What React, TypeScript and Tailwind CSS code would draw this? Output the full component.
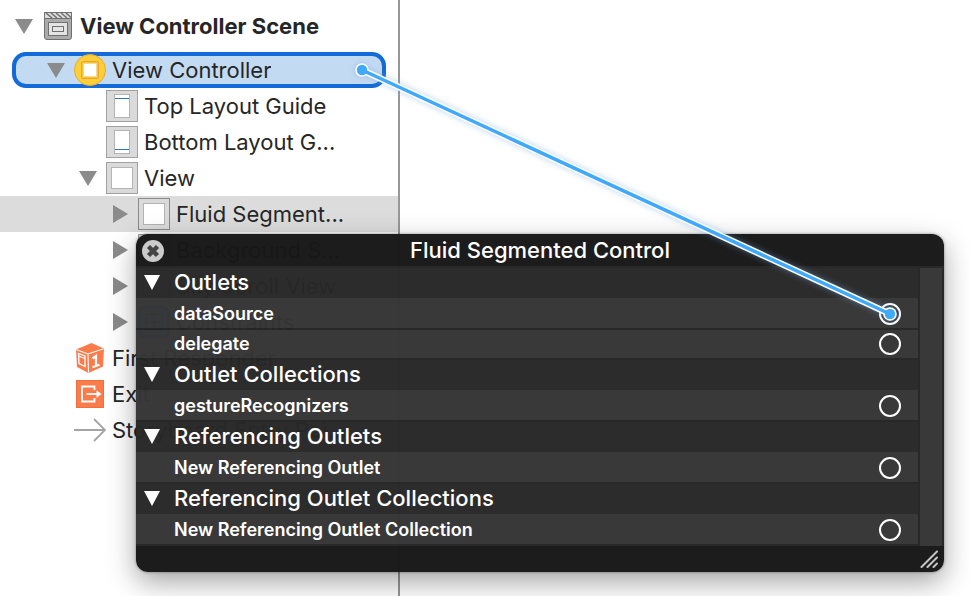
import type { ReactNode } from "react";

function Down({ size = "w-[18px]" }: { size?: string }) {
  return (
    <svg viewBox="0 0 18 15" preserveAspectRatio="none" className={"h-[15px] shrink-0 " + size} aria-hidden="true">
      <path d="M0 0H18L9 15Z" fill="currentColor" />
    </svg>
  );
}

function Right() {
  return (
    <svg viewBox="0 0 15 18" className="h-[18px] w-[15px] shrink-0" aria-hidden="true">
      <path d="M0 0V18L15 9Z" fill="currentColor" />
    </svg>
  );
}

function SceneIcon() {
  return (
    <svg viewBox="0 0 32 32" className="size-8 shrink-0" aria-hidden="true">
      <rect x="2.5" y="2.5" width="27" height="6" fill="#dedede" stroke="#707070" />
      <path d="M4 3l6 5M9 3l6 5M14 3l6 5M19 3l6 5M24 3l5 4.500" stroke="#707070" strokeWidth="1.600" />
      <path d="M2.500 8.500H29.500V27a2.500 2.500 0 0 1-2.500 2.500H5A2.500 2.500 0 0 1 2.500 27Z" fill="#ababab" stroke="#707070" />
      <rect x="6.500" y="12.500" width="19" height="13" fill="#e4e4e4" stroke="#707070" />
      <rect x="10.500" y="16.500" width="11" height="5" fill="#e4e4e4" stroke="#707070" />
    </svg>
  );
}

function ControllerIcon() {
  return (
    <svg viewBox="0 0 32 32" className="size-8 shrink-0" aria-hidden="true">
      <circle cx="16" cy="16" r="15.500" fill="#fdcf38" stroke="#eda92c" />
      <rect x="7.500" y="7.500" width="17" height="17" rx="1" fill="#fcc433" stroke="#eba52b" />
      <rect x="9" y="9" width="14" height="14" fill="#fff" />
      <rect x="9.500" y="9.500" width="13" height="13" fill="none" stroke="#f0b030" strokeDasharray="1 1" />
    </svg>
  );
}

function BoxIcon({ kind }: { kind: "top" | "bottom" | "view" | "selected" }) {
  const guide = kind === "top" || kind === "bottom";
  return (
    <svg viewBox="0 0 32 32" className="size-8 shrink-0" aria-hidden="true">
      <rect x="0.500" y="0.500" width="31" height="31" fill="#dadada" stroke={kind === "selected" ? "#8a8a8a" : "#a2a2a2"} />
      {guide ? (
        <rect x="8.500" y="4.500" width="15" height="23" fill="#fff" stroke="#b4b4b4" />
      ) : (
        <rect x="5.500" y="5.500" width="21" height="21" fill="#fff" stroke="#b4b4b4" />
      )}
      {guide && <path d={kind === "top" ? "M9 8.500H23" : "M9 23.500H23"} stroke="#2e7bbd" />}
    </svg>
  );
}

function ConstraintsIcon() {
  return (
    <svg viewBox="0 0 32 32" className="size-8 shrink-0" aria-hidden="true">
      <rect x="1.500" y="1.500" width="29" height="29" rx="5" fill="#a9b8ff" stroke="#3f5fe0" strokeWidth="3" />
      <path d="M8 8H24V24H8ZM16 8V24M8 16H24" fill="none" stroke="#3f5fe0" strokeWidth="2" />
    </svg>
  );
}

function ResponderIcon() {
  return (
    <svg viewBox="0 0 32 32" className="size-8 shrink-0" aria-hidden="true">
      <path d="M2 7.500L17.500 1L30 6.500L29 24.500L14.500 31L3 25Z" fill="#fb7b4b" />
      <path d="M2.500 7.800L14 12L29.500 6.700M14 12L14.500 30.500" fill="none" stroke="#fff" strokeWidth="1.100" />
      <path d="M4.500 11.500L11 14V24.500L5 21.500ZM4.500 14L11 16.500" fill="none" stroke="#fff" strokeWidth="1.300" />
      <path d="M18.500 16.500L22 14V24M18.500 25.300L25.500 22.800" fill="none" stroke="#fff" strokeWidth="2.200" />
    </svg>
  );
}

function ExitIcon() {
  return (
    <svg viewBox="0 0 32 32" className="size-8 shrink-0" aria-hidden="true">
      <rect x="2.500" y="2.500" width="27" height="27" fill="#fb7b4b" stroke="#ee6f40" />
      <path d="M20.500 12V8.500H8V23.500H20.500V20" fill="none" stroke="#fff" strokeWidth="1.800" />
      <path d="M12.500 16H25" stroke="#fff" strokeWidth="1.800" />
      <path d="M22.500 12.200L27.500 16L22.500 19.800Z" fill="#fff" />
    </svg>
  );
}

function EntryIcon() {
  return (
    <svg viewBox="0 0 32 32" className="size-8 shrink-0" aria-hidden="true">
      <path d="M0 16H31M20 5L31 16L20 27" fill="none" stroke="#a4a4a4" strokeWidth="1.800" />
    </svg>
  );
}

type Arrow = "down" | "right" | "none";

function TreeRow({ indent, arrow, icon, label, className = "" }: { indent: string; arrow: Arrow; icon: ReactNode; label: string; className?: string }) {
  return (
    <li className={"flex h-9 items-center " + indent + " " + className}>
      <span className="flex w-9 shrink-0 justify-center text-[#8b8b8b]">
        {arrow === "none" ? null : (
          <button type="button" aria-label={"Toggle " + label}>
            {arrow === "down" ? <Down /> : <Right />}
          </button>
        )}
      </span>
      {icon}
      <span className="ml-1.5 truncate">{label}</span>
    </li>
  );
}

function Section({ title, items }: { title: string; items: string[] }) {
  return (
    <section>
      <h3 className="flex h-8 items-center border-t-2 border-[#242424]/98 bg-[#282828]/98 bg-clip-padding pb-0.5 pl-2 text-[22px] font-medium">
        <button type="button" aria-label={"Collapse " + title}>
          <Down size="w-4" />
        </button>
        <span className="ml-3.5">{title}</span>
      </h3>
      <ul>
        {items.map((item) => (
          <li key={item} className="flex h-[30px] items-center justify-between bg-[#353535]/98 bg-clip-padding pr-4 pl-[38px] text-[18px] font-semibold not-first:border-t-2 not-first:border-[#242424]/98 first:pt-0.5">
            <span className="pb-0.5">{item}</span>
            <button type="button" aria-label={"Connect " + item} className="size-6 rounded-full p-px">
              <span className="block size-[22px] rounded-full border-2 border-white" />
            </button>
          </li>
        ))}
      </ul>
    </section>
  );
}

function ConnectionsPanel() {
  return (
    <aside className="absolute top-[234px] right-[26px] left-[136px] overflow-hidden rounded-xl text-white shadow-[0_10px_28px_rgba(0,0,0,0.36),0_0_3px_rgba(0,0,0,0.4)]">
      <header className="flex h-8 items-center bg-[#171717]/98 px-1.5">
        <button type="button" aria-label="Close" className="mt-0.5 size-[22px]">
          <svg viewBox="0 0 22 22" className="size-[22px]" aria-hidden="true">
            <circle cx="11" cy="11" r="11" fill="#cbcbcb" />
            <path d="M6.500 6.500L15.500 15.500M15.500 6.500L6.500 15.500" stroke="#444" strokeWidth="4.500" />
          </svg>
        </button>
        <h2 className="flex-1 pr-[22px] text-center text-[22px] font-medium">Fluid Segmented Control</h2>
      </header>
      <div className="flex">
        <div className="min-w-0 flex-1 border-b-2 border-[#242424]/98">
          <Section title="Outlets" items={["dataSource", "delegate"]} />
          <Section title="Outlet Collections" items={["gestureRecognizers"]} />
          <Section title="Referencing Outlets" items={["New Referencing Outlet"]} />
          <Section title="Referencing Outlet Collections" items={["New Referencing Outlet Collection"]} />
        </div>
        <div className="w-[26px] border-x-2 border-t-2 border-[#242424]/98 bg-[#353535]/98 bg-clip-padding" />
      </div>
      <footer className="flex h-[26px] items-center justify-end bg-[#171717]/98 pr-1.5">
        <svg viewBox="0 0 18 18" className="size-[18px]" aria-hidden="true">
          <path d="M1.500 17L17 1.500M7.500 17L17 7.500M13.500 17L17 13.500" stroke="#c4c4c4" strokeWidth="2" strokeLinecap="round" />
        </svg>
      </footer>
    </aside>
  );
}

function Connection() {
  return (
    <svg viewBox="0 0 970 596" className="pointer-events-none absolute top-0 left-0 h-[596px] w-[970px]" aria-hidden="true">
      <g className="drop-shadow-[0_0_3px_rgba(120,165,215,0.5)]">
        <path d="M362 70L890 314" stroke="#fff" strokeWidth="6.500" />
        <circle cx="362" cy="70" r="6.800" fill="#fff" />
        <circle cx="890" cy="314" r="6.800" fill="#fff" />
      </g>
      <path d="M362 70L890 314" stroke="#3fa9fc" strokeWidth="3.500" />
      <circle cx="362" cy="70" r="5.200" fill="#3fa9fc" />
      <circle cx="890" cy="314" r="5.200" fill="#3fa9fc" />
    </svg>
  );
}

export default function App() {
  return (
    <main className="relative flex min-h-screen overflow-hidden bg-white font-['Inter','Liberation_Sans',sans-serif] text-[22px] text-[#262626]">
      <nav className="w-[400px] shrink-0 border-r-2 border-[#979797]" aria-label="Document outline">
        <h1 className="flex h-[52px] items-center pl-[15px] font-bold">
          <button type="button" aria-label="Toggle View Controller Scene" className="text-[#8b8b8b]">
            <Down />
          </button>
          <span className="ml-[9px]">
            <SceneIcon />
          </span>
          <span className="ml-1.5">View Controller Scene</span>
        </h1>
        <ul>
          <TreeRow indent="pl-[22px]" arrow="down" icon={<ControllerIcon />} label="View Controller" className="mr-3 ml-3 rounded-[14px] border-4 border-[#126bd8] bg-[#c3daf3]" />
          <TreeRow indent="pl-[70px]" arrow="none" icon={<BoxIcon kind="top" />} label="Top Layout Guide" />
          <TreeRow indent="pl-[70px]" arrow="none" icon={<BoxIcon kind="bottom" />} label="Bottom Layout G..." />
          <TreeRow indent="pl-[70px]" arrow="down" icon={<BoxIcon kind="view" />} label="View" />
          <TreeRow indent="pl-[102px]" arrow="right" icon={<BoxIcon kind="selected" />} label="Fluid Segment..." className="bg-[#dcdcdc]" />
          <TreeRow indent="pl-[102px]" arrow="right" icon={<BoxIcon kind="view" />} label="Background S..." />
          <TreeRow indent="pl-[102px]" arrow="right" icon={<BoxIcon kind="view" />} label="Sky Scroll View" />
          <TreeRow indent="pl-[102px]" arrow="right" icon={<ConstraintsIcon />} label="Constraints" />
          <TreeRow indent="pl-[38px]" arrow="none" icon={<ResponderIcon />} label="First Responder" />
          <TreeRow indent="pl-[38px]" arrow="none" icon={<ExitIcon />} label="Exit" />
          <TreeRow indent="pl-[38px]" arrow="none" icon={<EntryIcon />} label="Storyboard Entry Poi..." />
        </ul>
      </nav>
      <ConnectionsPanel />
      <Connection />
    </main>
  );
}
